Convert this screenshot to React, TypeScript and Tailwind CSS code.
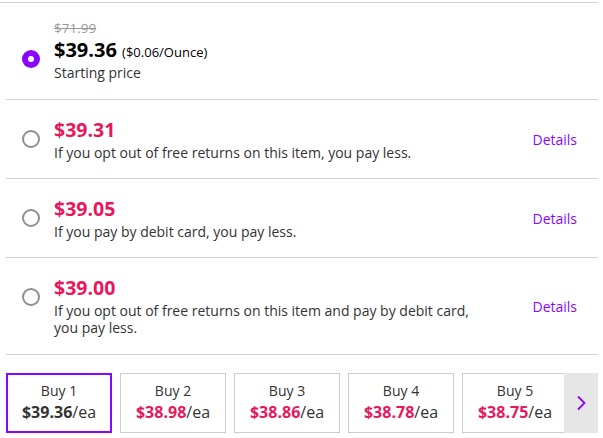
const font = { fontFamily: '"Open Sans", "Noto Sans", sans-serif' };

type Offer = { price: string; note: string };

const offers: Offer[] = [
  { price: "$39.31", note: "If you opt out of free returns on this item, you pay less." },
  { price: "$39.05", note: "If you pay by debit card, you pay less." },
  {
    price: "$39.00",
    note: "If you opt out of free returns on this item and pay by debit card, you pay less.",
  },
];

const tiers = [
  { qty: 1, price: "$39.36" },
  { qty: 2, price: "$38.98" },
  { qty: 3, price: "$38.86" },
  { qty: 4, price: "$38.78" },
  { qty: 5, price: "$38.75" },
];

function Radio({ checked }: { checked?: boolean }) {
  if (checked) {
    return (
      <div className="mt-[11px] flex h-[18px] w-[18px] shrink-0 items-center justify-center rounded-full bg-[#8a05ff]">
        <div className="h-[6px] w-[6px] rounded-full bg-white" />
      </div>
    );
  }
  return <div className="mt-[11px] h-[18px] w-[18px] shrink-0 rounded-full border-2 border-[#8f8f8f]" />;
}

export default function App() {
  return (
    <div className="h-[438px] w-[603px] overflow-hidden bg-white text-[#333]" style={font}>
      <div className="mt-[2px] h-px w-[598px] bg-[#d2d2d2]" />
      <div className="ml-[6px] w-[592px]">
        {/* starting price */}
        <div className="flex items-start gap-[14px] border-b border-[#d2d2d2] pb-[17px] pl-[16px] pt-[16px]">
          <div className="mt-[20px]">
            <Radio checked />
          </div>
          <div>
            <div className="text-[13.5px] leading-[18px] text-[#999] line-through">$71.99</div>
            <div className="h-[26px] text-[20px] font-bold leading-[26px] text-black">
              $39.36{" "}
              <span className="text-[13px] font-normal leading-none">($0.06/Ounce)</span>
            </div>
            <div className="mt-[1px] text-[14px] leading-[18px]">Starting price</div>
          </div>
        </div>

        {offers.map((o, i) => (
          <div
            key={o.price}
            className={
              i === offers.length - 1
                ? "flex items-center border-b border-[#d2d2d2] pb-[18px] pl-[16px] pr-[21px] pt-[19px]"
                : "flex items-center border-b border-[#d2d2d2] pb-[17px] pl-[16px] pr-[21px] pt-[19px]"
            }
          >
            <div className="flex flex-1 items-start gap-[14px] self-start">
              <Radio />
              <div className="w-[430px]">
                <div className="text-[19.5px] font-bold leading-[22px] text-[#e8175d]">{o.price}</div>
                <div className="mt-[3px] text-[14px] leading-[17px]">{o.note}</div>
              </div>
            </div>
            <a className="text-[14px] leading-[18px] text-[#8a05ff]">Details</a>
          </div>
        ))}

        {/* quantity tiers */}
        <div className="relative mt-[18px] flex h-[60px] w-[592px] gap-[8px] overflow-hidden">
          {tiers.map((t) => (
            <div
              key={t.qty}
              className={
                t.qty === 1
                  ? "flex h-[60px] w-[106px] shrink-0 flex-col items-center justify-center border-2 border-[#8a05ff] pb-[3px]"
                  : "flex h-[60px] w-[106px] shrink-0 flex-col items-center justify-center border border-[#cccccc] pb-[3px]"
              }
            >
              <div className="text-[14px] leading-[20px]">Buy {t.qty}</div>
              <div className="text-[16px] leading-[22px]">
                <span className={t.qty === 1 ? "font-bold text-[#333]" : "font-bold text-[#e8175d]"}>
                  {t.price}
                </span>
                /ea
              </div>
            </div>
          ))}
          <div className="absolute right-0 top-0 flex h-[60px] w-[34px] items-center justify-center bg-[#e6e6e6]">
            <svg width="10" height="16" viewBox="0 0 10 16" fill="none">
              <path d="M2 1.5 L8.5 8 L2 14.5" stroke="#8a05ff" strokeWidth="1.8" />
            </svg>
          </div>
        </div>
      </div>
    </div>
  );
}
